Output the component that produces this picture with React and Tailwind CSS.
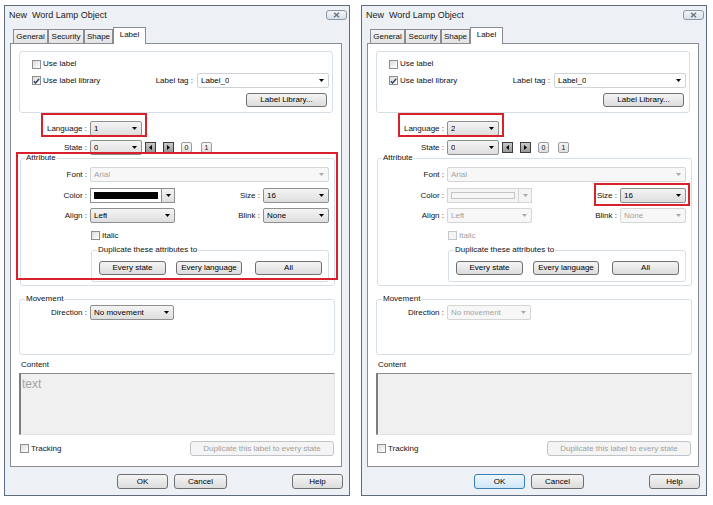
import React from "react";

function Arrow({ off }) {
  return (
    <svg width="5" height="3" viewBox="0 0 5 3" className="shrink-0">
      <path d="M0 0h5L2.5 3z" fill={off ? "#a9a9a9" : "#000"} />
    </svg>
  );
}

function Combo({ w, value, off, flat }) {
  const look = off
    ? "border-[#d5d5d5] bg-[#f7f7f7] text-[#a3a3a3]"
    : flat
    ? "border-[#cfd3d8] bg-white text-black"
    : "border-[#8e8f8f] bg-gradient-to-b from-[#f4f4f4] to-[#dedede] text-black";
  return (
    <div className={`${w} h-[15px] flex items-center justify-between rounded-[2px] border pl-[3px] pr-[4px] ${look}`}>
      <span className="truncate">{value}</span>
      <Arrow off={off} />
    </div>
  );
}

function ColorCombo({ off }) {
  return (
    <div className={`w-[85px] h-[15px] flex border ${off ? "border-[#d5d5d5] bg-[#f4f4f4]" : "border-[#8e8f8f] bg-white"}`}>
      <div className="flex-1 flex items-center px-[3px]">
        <div className={`w-full h-[7px] ${off ? "border border-[#c4c4c4] bg-[#f6f6f6]" : "bg-black"}`} />
      </div>
      <div className={`w-[13px] flex items-center justify-center border-l ${off ? "border-[#d5d5d5]" : "border-[#8e8f8f] bg-gradient-to-b from-[#f4f4f4] to-[#dedede]"}`}>
        <Arrow off={off} />
      </div>
    </div>
  );
}

function Check({ on, off }) {
  return (
    <span className={`w-[9px] h-[9px] border flex items-center justify-center shrink-0 ${off ? "border-[#c6c6c6] bg-[#f4f4f4]" : "border-[#8f8f8f] bg-gradient-to-br from-[#dcdcdc] to-white"}`}>
      {on && (
        <svg width="7" height="6" viewBox="0 0 7 6">
          <path d="M0.8 3.2l1.8 1.8L6.2 0.8" fill="none" stroke="#2a3f6b" strokeWidth="1.4" />
        </svg>
      )}
    </span>
  );
}

function Btn({ w, h = "h-[15px]", off, def, cls = "", children }) {
  const look = off
    ? "border-[#c0c4c8] bg-[#f4f4f4] text-[#a0a0a0]"
    : def
    ? "border-[#3c7fb1] bg-gradient-to-b from-[#eef6fc] to-[#cfe6f7] text-black"
    : "border-[#707070] bg-gradient-to-b from-[#f5f5f5] to-[#dcdcdc] text-black";
  return (
    <div className={`${w} ${h} ${cls} shrink-0 flex items-center justify-center rounded-[3px] border ${look}`}>
      {children}
    </div>
  );
}

function Nav({ dir, cls }) {
  return (
    <span className={`w-[11px] h-[11px] border border-[#3d3d3d] bg-gradient-to-b from-[#c9c9c9] to-[#9a9a9a] flex items-center justify-center ${cls}`}>
      <svg width="3" height="5" viewBox="0 0 3 5">
        <path d={dir === "l" ? "M3 0v5L0 2.5z" : "M0 0v5l3-2.5z"} fill="#000" />
      </svg>
    </span>
  );
}

function Num({ n, cls }) {
  return (
    <span className={`w-[11px] h-[11px] border border-[#9c9c9c] rounded-[2px] bg-gradient-to-b from-[#f6f6f6] to-[#e0e0e0] text-[7px] leading-[9px] flex items-center justify-center ${cls}`}>
      {n}
    </span>
  );
}

const tabs = [
  ["General", "w-[35px]"],
  ["Security", "w-[36px]"],
  ["Shape", "w-[29px]"],
];

function Dialog({ lang, right }) {
  const off = right;
  return (
    <div className="w-[346px] h-[491px] shrink-0 border border-[#5d6b7c] bg-[#edf1f5] flex flex-col">
      <div className="h-[19px] flex items-start justify-between pl-[4px] pr-[2px]">
        <span className="mt-[4px] text-[9px] leading-[11px] whitespace-pre text-[#222]">New  Word Lamp Object</span>
        <div className="mt-[4px] w-[21px] h-[10px] rounded-[3px] border border-[#8c97a5] bg-gradient-to-b from-[#f3f6f9] to-[#d9e0e8] flex items-center justify-center">
          <svg width="7" height="6" viewBox="0 0 7 6">
            <path d="M1 0.8l5 4.4M6 0.8l-5 4.4" stroke="#6b7683" strokeWidth="1.5" />
          </svg>
        </div>
      </div>

      <div className="mt-[2px] pl-[5px] pr-[7px]">
        <div className="h-[16px] flex items-end pl-[3px]">
          {tabs.map(([t, w]) => (
            <div key={t} className={`${w} h-[14px] border border-b-0 border-[#898c95] bg-gradient-to-b from-[#f4f4f4] to-[#e3e3e3] flex items-center justify-center`}>
              {t}
            </div>
          ))}
          <div className="relative z-10 w-[33px] h-[17px] mb-[-1px] border border-b-0 border-[#898c95] bg-white flex justify-center pt-[2px]">
            Label
          </div>
        </div>

        <div className="relative h-[424px] border border-[#898c95] bg-white flex flex-col">
          <div className="mt-[7px] ml-[8px] w-[314px] h-[62px] border border-[#d5dfe5] rounded-[3px] flex flex-col">
            <div className="mt-[7px] ml-[12px] h-[10px] flex items-center gap-[2px]">
              <Check />
              <span>Use label</span>
            </div>
            <div className="mt-[4px] ml-[12px] mr-[3px] h-[15px] flex items-center">
              <Check on />
              <span className="ml-[2px]">Use label library</span>
              <span className="ml-auto mr-[4px]">Label tag :</span>
              <Combo w="w-[132px]" value="Label_0" flat />
            </div>
            <div className="mt-[5px] mr-[5px] flex justify-end">
              <Btn w="w-[81px]" h="h-[14px]">Label Library...</Btn>
            </div>
          </div>

          <div className="mt-[8px] h-[15px] flex items-center">
            <span className="w-[76px] text-right">Language :</span>
            <div className="ml-[3px]">
              <Combo w="w-[52px]" value={lang} />
            </div>
          </div>

          <div className="mt-[4px] h-[15px] flex items-center">
            <span className="w-[76px] text-right">State :</span>
            <div className="ml-[3px]">
              <Combo w="w-[52px]" value="0" />
            </div>
            <Nav dir="l" cls="ml-[3px]" />
            <Nav dir="r" cls="ml-[7px]" />
            <Num n="0" cls="ml-[7px]" />
            <Num n="1" cls="ml-[9px]" />
          </div>

          <fieldset className="mt-[-2px] ml-[9px] w-[315px] border border-[#d5dfe5] rounded-[3px] pr-[5px] pb-[3px]">
            <legend className="ml-[4px] px-[1px] leading-[10px]">Attribute</legend>
            <div className="mt-[4px] h-[15px] flex items-center">
              <span className="w-[66px] text-right">Font :</span>
              <div className="ml-[3px]">
                <Combo w="w-[239px]" value="Arial" off />
              </div>
            </div>
            <div className="mt-[6px] h-[15px] flex items-center">
              <span className="w-[66px] text-right">Color :</span>
              <div className="ml-[3px]">
                <ColorCombo off={off} />
              </div>
              <span className="ml-auto mr-[3px]">Size :</span>
              <Combo w="w-[66px]" value="16" />
            </div>
            <div className="mt-[5px] h-[15px] flex items-center">
              <span className="w-[66px] text-right">Align :</span>
              <div className="ml-[3px]">
                <Combo w="w-[85px]" value="Left" off={off} />
              </div>
              <span className="ml-auto mr-[3px]">Blink :</span>
              <Combo w="w-[66px]" value="None" off={off} />
            </div>
            <div className="mt-[8px] h-[9px] pl-[70px] flex items-center gap-[2px]">
              <Check off={off} />
              <span className={off ? "text-[#a0a0a0]" : ""}>Italic</span>
            </div>
            <fieldset className="mt-[5px] ml-[70px] w-[238px] border border-[#d5dfe5] rounded-[3px] pb-[6px]">
              <legend className="ml-[5px] px-[1px] leading-[10px]">Duplicate these attributes to</legend>
              <div className="mt-[6px] flex pl-[7px]">
                <Btn w="w-[67px]" h="h-[14px]">Every state</Btn>
                <Btn w="w-[66px]" h="h-[14px]" cls="ml-[10px]">Every language</Btn>
                <Btn w="w-[67px]" h="h-[14px]" cls="ml-[13px]">All</Btn>
              </div>
            </fieldset>
          </fieldset>

          <fieldset className="mt-[8px] ml-[8px] w-[316px] border border-[#d5dfe5] rounded-[3px] pb-[34px]">
            <legend className="ml-[5px] px-[1px] leading-[10px]">Movement</legend>
            <div className="mt-[1px] h-[15px] flex items-center">
              <span className="w-[67px] text-right">Direction :</span>
              <div className="ml-[3px]">
                <Combo w="w-[84px]" value="No movement" off={off} />
              </div>
            </div>
          </fieldset>

          <div className="mt-[5px] ml-[10px] h-[10px]">Content</div>
          <div className="mt-[3px] ml-[8px] w-[316px] h-[62px] border-t border-l-2 border-r border-b border-t-[#8c8c8c] border-l-[#7d7d7d] border-r-[#e3e3e3] border-b-[#e3e3e3] bg-[#f0f0f0] pl-[1px] pt-[3px] text-[12px] leading-[14px] text-[#a3a3a3]">
            {right ? "" : "text"}
          </div>

          <div className="mt-[6px] h-[15px] flex items-center pl-[9px] pr-[7px]">
            <Check />
            <span className="ml-[2px]">Tracking</span>
            <Btn w="w-[144px]" off cls="ml-auto">Duplicate this label to every state</Btn>
          </div>

          <div className="absolute left-[30px] top-[69px] w-[106px] h-[24px] border-2 border-[#d7222c]" />
          {!right && <div className="absolute left-[5px] top-[108px] w-[322px] h-[128px] border-2 border-[#d7222c]" />}
          {right && <div className="absolute left-[226px] top-[139px] w-[96px] h-[23px] border-2 border-[#d7222c]" />}
        </div>
      </div>

      <div className="mt-[7px] flex pl-[112px]">
        <Btn w="w-[51px]" def={right}>OK</Btn>
        <Btn w="w-[53px]" cls="ml-[6px]">Cancel</Btn>
        <Btn w="w-[51px]" cls="ml-[65px]">Help</Btn>
      </div>
    </div>
  );
}

export default function App() {
  return (
    <div className="w-[713px] h-[505px] bg-white flex gap-[11px] pl-[4px] pt-[5px] font-['Liberation_Sans',Arial,sans-serif] text-[8px] leading-[10px] text-[#111]">
      <Dialog lang="1" />
      <Dialog lang="2" right />
    </div>
  );
}
